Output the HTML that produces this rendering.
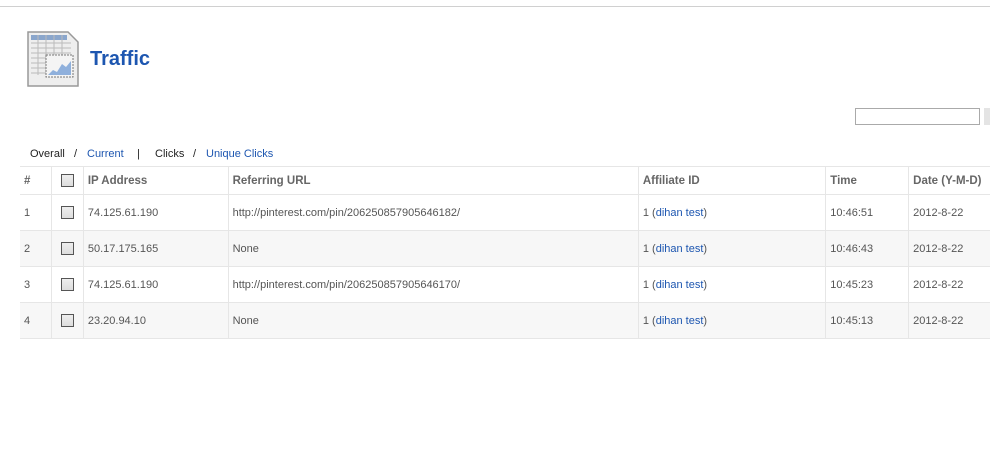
<!DOCTYPE html>
<html><head><style>
body{margin:0;width:990px;height:450px;overflow:hidden;background:#fff;font-family:"Liberation Sans",Arial,sans-serif;position:relative}
.top{position:absolute;left:0;top:6px;width:990px;height:1px;background:#d0d0d0}
h1{position:absolute;left:90px;top:48px;margin:0;font-size:20px;color:#1d56b0;font-weight:bold}
.nav{position:absolute;left:30px;top:148px;font-size:11px;color:#222;white-space:pre}
.nav span{position:absolute;top:0}
.nav a{color:#1d56b0;text-decoration:none}
.search{position:absolute;left:855px;top:108px;border:1px solid #aaa;box-sizing:border-box;width:125px;height:17px}
.btn{position:absolute;left:984px;top:108px;width:8px;height:17px;background:#e4e4e4}
table{position:absolute;left:20px;top:166px;border-collapse:collapse;font-size:11px;color:#555}
td,th{border:1px solid #e6e6e6;border-top:none;padding:0 0 0 4px;height:35px;text-align:left;vertical-align:middle}
tr td:first-child,tr th:first-child{border-left:none}
th{height:27px;font-size:11.5px;font-weight:bold;color:#666;border-top:1px solid #e6e6e6}
tr:nth-child(odd) td{background:#f7f7f7}
.cb{display:inline-block;width:11px;height:11px;border:1px solid #555;background:linear-gradient(#eee,#ddd);margin-left:5px;vertical-align:middle}
a{color:#1d56b0;text-decoration:none}
</style></head><body>
<div class="top"></div>
<svg style="position:absolute;left:26px;top:30px" width="54" height="60" viewBox="0 0 54 60">
<path d="M2 2h40l10 10v44H2z" fill="#eee" stroke="#999" stroke-width="1.5"/>
<rect x="5" y="5" width="36" height="5" fill="#8aa6cc"/>
<g stroke="#bbb" stroke-width="1"><path d="M5 13h40M5 18h40M5 23h40M5 28h40M5 33h40M5 38h40M5 43h40M12 5v40M20 5v40M28 5v40M36 5v40"/></g>
<rect x="20" y="25" width="27" height="22" fill="#f4f4f4" stroke="#777" stroke-dasharray="2 1"/>
<path d="M22 45L27 40L31 42L36 34L40 37L45 31V45z" fill="#8fb0dc"/>
</svg>
<h1>Traffic</h1>
<div class="search"></div><div class="btn"></div>
<div class="nav"><span style="left:0">Overall</span><span style="left:44px">/</span><a><span style="left:57px">Current</span></a><span style="left:107px">|</span><span style="left:125px">Clicks</span><span style="left:163px">/</span><a><span style="left:176px">Unique Clicks</span></a></div>
<table>
<tr><th style="width:27px">#</th><th style="width:27px"><span class="cb"></span></th><th style="width:140px">IP Address</th><th style="width:406px">Referring URL</th><th style="width:183px">Affiliate ID</th><th style="width:78px">Time</th><th style="width:77px;border-right:none">Date (Y-M-D)</th></tr>
<tr><td>1</td><td><span class="cb"></span></td><td>74.125.61.190</td><td>http://pinterest.com/pin/206250857905646182/</td><td>1 (<a>dihan test</a>)</td><td>10:46:51</td><td style="border-right:none">2012-8-22</td></tr>
<tr><td>2</td><td><span class="cb"></span></td><td>50.17.175.165</td><td>None</td><td>1 (<a>dihan test</a>)</td><td>10:46:43</td><td style="border-right:none">2012-8-22</td></tr>
<tr><td>3</td><td><span class="cb"></span></td><td>74.125.61.190</td><td>http://pinterest.com/pin/206250857905646170/</td><td>1 (<a>dihan test</a>)</td><td>10:45:23</td><td style="border-right:none">2012-8-22</td></tr>
<tr><td style="height:33px">4</td><td><span class="cb"></span></td><td>23.20.94.10</td><td>None</td><td>1 (<a>dihan test</a>)</td><td>10:45:13</td><td style="border-right:none">2012-8-22</td></tr>
</table>
</body></html>
